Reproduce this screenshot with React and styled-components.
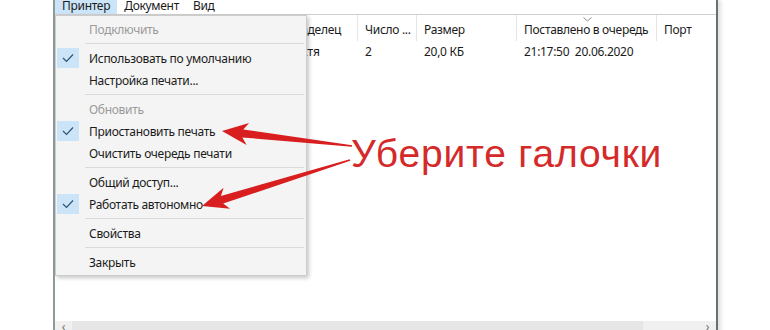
import React from 'react';
import styled, { createGlobalStyle } from 'styled-components';

const Global = createGlobalStyle`
  html, body { margin: 0; padding: 0; background: #fff; overflow: hidden; }
  body { font-family: "Noto Sans", "Liberation Sans", sans-serif; color: #1b1b1b; letter-spacing: -0.3px; }
`;

const Page = styled.div`
  position: relative;
  width: 770px;
  height: 330px;
  overflow: hidden;
  background: #fff;
`;

const Window = styled.div`
  position: relative;
  margin-left: 53px;
  width: 665px;
  height: 338px;
  box-sizing: border-box;
  border-left: 2px solid #8f9a9a;
  border-right: 2px solid #667373;
  box-shadow: 3px 0 4px rgba(0, 0, 0, 0.12);
  display: flex;
  flex-direction: column;
  background: #fff;
`;

const MenuBar = styled.div`
  display: flex;
  height: 14px;
  border-bottom: 1px solid #cfcfcf;
  font-size: 12px;
`;

const MenuTitle = styled.div`
  padding: 0 7px;
  line-height: 12px;
  height: 14px;
  box-sizing: border-box;
  background: ${p => (p.$active ? '#cce4f7' : 'transparent')};
`;

const ListView = styled.div`
  flex: 1;
  display: flex;
  flex-direction: column;
  font-size: 12px;
`;

const Header = styled.div`
  display: flex;
  height: 26px;
`;

const HeaderCell = styled.div`
  position: relative;
  flex: ${p => (p.$w ? `0 0 ${p.$w}px` : '1')};
  box-sizing: border-box;
  padding-left: 7px;
  border-right: ${p => (p.$w ? '1px solid #e5e5e5' : 'none')};
  display: flex;
  align-items: center;
  padding-top: 2px;
  white-space: nowrap;
  overflow: hidden;
`;

const SortMark = styled.svg`
  position: absolute;
  left: 50%;
  top: 2px;
  margin-left: -4px;
`;

const Row = styled.div`
  display: flex;
  height: 20px;
`;

const Cell = styled.div`
  flex: ${p => (p.$w ? `0 0 ${p.$w}px` : '1')};
  box-sizing: border-box;
  padding-left: 7px;
  display: flex;
  align-items: center;
  white-space: pre;
  overflow: hidden;
`;

const Body = styled.div`
  flex: 1;
`;

const ScrollBar = styled.div`
  display: flex;
  height: 17px;
  background: #f0f0f0;
`;

const ScrollArrow = styled.div`
  flex: 0 0 17px;
  display: flex;
  justify-content: center;
  align-items: flex-start;
  color: #6f6f6f;
  font-size: 12px;
  line-height: 12px;
`;

const Thumb = styled.div`
  flex: 0 0 571px;
  background: #e6e6e6;
`;

const Track = styled.div`
  flex: 1;
`;

const Dropdown = styled.div`
  position: absolute;
  left: 0;
  top: 15px;
  width: 252px;
  box-sizing: border-box;
  padding: 2px 0;
  background: #f4f4f4;
  border: 1px solid #cccccc;
  box-shadow: 2px 2px 4px rgba(0, 0, 0, 0.22);
  font-size: 12px;
  z-index: 2;
`;

const Item = styled.div`
  position: relative;
  height: 22px;
  display: flex;
  align-items: center;
  padding-left: 33px;
  color: ${p => (p.$disabled ? '#9a9a9a' : '#1b1b1b')};
`;

const CheckBox = styled.div`
  position: absolute;
  left: 1px;
  top: 1px;
  width: 22px;
  height: 20px;
  background: #cce4f7;
  display: flex;
  align-items: center;
  justify-content: center;
`;

const Separator = styled.div`
  height: 7px;
  position: relative;
  &::after {
    content: '';
    position: absolute;
    left: 29px;
    right: 2px;
    top: 3px;
    height: 1px;
    background: #d9d9d9;
  }
`;

const Note = styled.div`
  position: absolute;
  left: 351px;
  top: 134px;
  font-family: "Liberation Sans", Arial, sans-serif;
  font-size: 39px;
  line-height: 39px;
  letter-spacing: 0.8px;
  color: #d42a2a;
  white-space: nowrap;
  z-index: 3;
`;

const Arrows = styled.svg`
  position: absolute;
  left: 0;
  top: 0;
  z-index: 4;
  pointer-events: none;
`;

const cols = [125, 100, 78, 59, 100, 140, 0];
const headers = ['Имя документа', 'Состояние', 'Владелец', 'Число ...', 'Размер', 'Поставлено в очередь', 'Порт'];
const row = ['Документ', 'Печать', 'Настя', '2', '20,0 КБ', '21:17:50  20.06.2020', ''];

const menu = [
  { t: 'Подключить', disabled: true },
  { sep: true },
  { t: 'Использовать по умолчанию', checked: true },
  { t: 'Настройка печати...' },
  { sep: true },
  { t: 'Обновить', disabled: true },
  { t: 'Приостановить печать', checked: true },
  { t: 'Очистить очередь печати' },
  { sep: true },
  { t: 'Общий доступ...' },
  { t: 'Работать автономно', checked: true },
  { sep: true },
  { t: 'Свойства' },
  { sep: true },
  { t: 'Закрыть' },
];

const Check = () => (
  <svg width="12" height="10" viewBox="0 0 12 10">
    <polyline points="1,5 4.5,8.5 11,1.5" fill="none" stroke="#2b5476" strokeWidth="1.2" />
  </svg>
);

function arrow(tail, tip, headLen, headHalf, shaftHalf) {
  const dx = tip[0] - tail[0];
  const dy = tip[1] - tail[1];
  const len = Math.hypot(dx, dy);
  const ux = dx / len, uy = dy / len;
  const px = -uy, py = ux;
  const bx = tip[0] - ux * headLen, by = tip[1] - uy * headLen;
  const cx = tip[0] - ux * (headLen + 5), cy = tip[1] - uy * (headLen + 5);
  const pts = [
    tip,
    [cx + px * headHalf, cy + py * headHalf],
    [bx + px * shaftHalf, by + py * shaftHalf],
    [tail[0] + px * 0.7, tail[1] + py * 0.7],
    [tail[0] - px * 0.7, tail[1] - py * 0.7],
    [bx - px * shaftHalf, by - py * shaftHalf],
    [cx - px * headHalf, cy - py * headHalf],
  ];
  return pts.map(p => `${p[0].toFixed(1)},${p[1].toFixed(1)}`).join(' ');
}

export default function App() {
  return (
    <Page>
      <Global />
      <Window>
        <MenuBar>
          <MenuTitle $active>Принтер</MenuTitle>
          <MenuTitle>Документ</MenuTitle>
          <MenuTitle>Вид</MenuTitle>
        </MenuBar>
        <ListView>
          <Header>
            {headers.map((h, i) => (
              <HeaderCell key={h} $w={cols[i]}>
                {i === 5 && (
                  <SortMark width="9" height="5" viewBox="0 0 9 5">
                    <polyline points="0.5,0.5 4.5,4 8.5,0.5" fill="none" stroke="#8a8a8a" strokeWidth="1" />
                  </SortMark>
                )}
                {h}
              </HeaderCell>
            ))}
          </Header>
          <Row>
            {row.map((c, i) => (
              <Cell key={i} $w={cols[i]}>{c}</Cell>
            ))}
          </Row>
          <Body />
          <ScrollBar>
            <ScrollArrow>‹</ScrollArrow>
            <Thumb />
            <Track />
            <ScrollArrow>›</ScrollArrow>
          </ScrollBar>
        </ListView>
        <Dropdown>
          {menu.map((m, i) =>
            m.sep ? (
              <Separator key={i} />
            ) : (
              <Item key={i} $disabled={m.disabled}>
                {m.checked && (
                  <CheckBox>
                    <Check />
                  </CheckBox>
                )}
                {m.t}
              </Item>
            )
          )}
        </Dropdown>
      </Window>
      <Note>Уберите галочки</Note>
      <Arrows width="770" height="330" viewBox="0 0 770 330">
        <polygon points={arrow([352, 146], [222, 131], 21, 11, 4)} fill="#d81e1e" />
        <polygon points={arrow([350, 160], [202, 206], 21, 11, 4)} fill="#d81e1e" />
      </Arrows>
    </Page>
  );
}
